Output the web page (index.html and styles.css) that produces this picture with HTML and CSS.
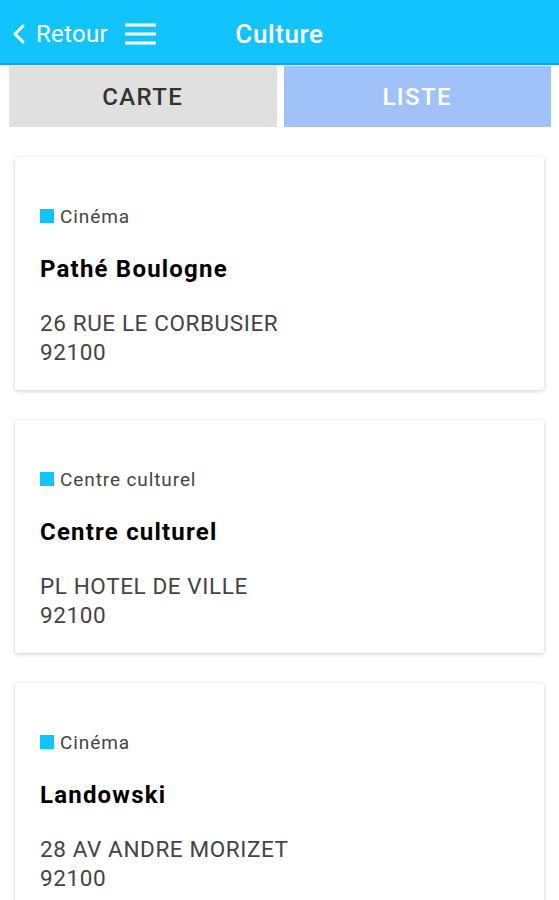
FILE: index.html
```html
<!DOCTYPE html>
<html>
<head>
    <title>Culture</title>
    <link rel="stylesheet" href="styles.css">
</head>
<body>
    <div class="header">
        <div class="header-left">
            <a class="back" href="#">
                <svg width="14" height="22" viewBox="0 0 14 22"><path d="M11 3 L3 11 L11 19" fill="none" stroke="#fff" stroke-width="3" stroke-linecap="round" stroke-linejoin="round"/></svg>
                Retour
            </a>
            <svg class="burger" width="33" height="22" viewBox="0 0 33 22"><path d="M1 2 H32 M1 11 H32 M1 20 H32" stroke="#fff" stroke-width="3"/></svg>
        </div>
        <h1>Culture</h1>
    </div>

    <div class="tabs">
        <button class="tab">CARTE</button>
        <button class="tab active">LISTE</button>
    </div>

    <div class="list">
        <div class="card">
            <div class="category"><span class="dot"></span>Cinéma</div>
            <div class="name">Pathé Boulogne</div>
            <div class="address">26 RUE LE CORBUSIER<br>92100</div>
        </div>
        <div class="card">
            <div class="category"><span class="dot"></span>Centre culturel</div>
            <div class="name">Centre culturel</div>
            <div class="address">PL HOTEL DE VILLE<br>92100</div>
        </div>
        <div class="card">
            <div class="category"><span class="dot"></span>Cinéma</div>
            <div class="name">Landowski</div>
            <div class="address">28 AV ANDRE MORIZET<br>92100</div>
        </div>
    </div>
</body>
</html>
```

FILE: styles.css
```css
body {
    font-family: Roboto, "Liberation Sans", Arial, sans-serif;
    background-color: #fff;
    color: #333;
    margin: 0;
    padding: 0;
}
.header {
    position: relative;
    height: 65px;
    box-sizing: border-box;
    padding-top: 4px;
    background-color: #12c4fd;
    border-bottom: 2px solid #1a9fe4;
    display: flex;
    align-items: center;
}
.header h1 {
    flex: 1;
    margin: 0;
    text-align: center;
    color: #fff;
    font-size: 26px;
    font-weight: 500;
    letter-spacing: 0.6px;
}
.header-left {
    position: absolute;
    left: 12px;
    top: 4px;
    bottom: 0;
    display: flex;
    align-items: center;
}
.back {
    display: flex;
    align-items: center;
    gap: 10px;
    color: #fff;
    text-decoration: none;
    font-size: 24px;
    letter-spacing: 0.3px;
}
.burger {
    margin-left: 16px;
}
.tabs {
    display: flex;
    gap: 7px;
    padding: 1px 8px 0 9px;
}
.tab {
    flex: 1;
    height: 61px;
    border: none;
    border-radius: 0;
    background-color: #e1e0e1;
    color: #333;
    font-family: inherit;
    font-size: 24px;
    font-weight: 500;
    letter-spacing: 1.4px;
    padding: 0;
}
.tab.active {
    background-color: #a1c2f8;
    color: #fff;
}
.list {
    padding: 30px 15px 0 15px;
}
.card {
    background-color: #fff;
    border-radius: 3px;
    box-shadow: 0 1px 4px rgba(0, 0, 0, 0.2);
    padding: 45px 25px 23px 25px;
    margin-bottom: 30px;
}
.category {
    display: flex;
    align-items: center;
    font-size: 19px;
    line-height: 30px;
    letter-spacing: 0.9px;
    color: #444;
}
.dot {
    width: 14px;
    height: 14px;
    background-color: #12c4fd;
    margin-right: 6px;
    margin-top: -2px;
}
.name {
    margin-top: 22px;
    font-size: 24px;
    font-weight: 700;
    line-height: 30px;
    letter-spacing: 1.2px;
    color: #000;
}
.address {
    margin-top: 25px;
    font-size: 22.5px;
    line-height: 29px;
    letter-spacing: 0.6px;
    color: #444;
}
```
